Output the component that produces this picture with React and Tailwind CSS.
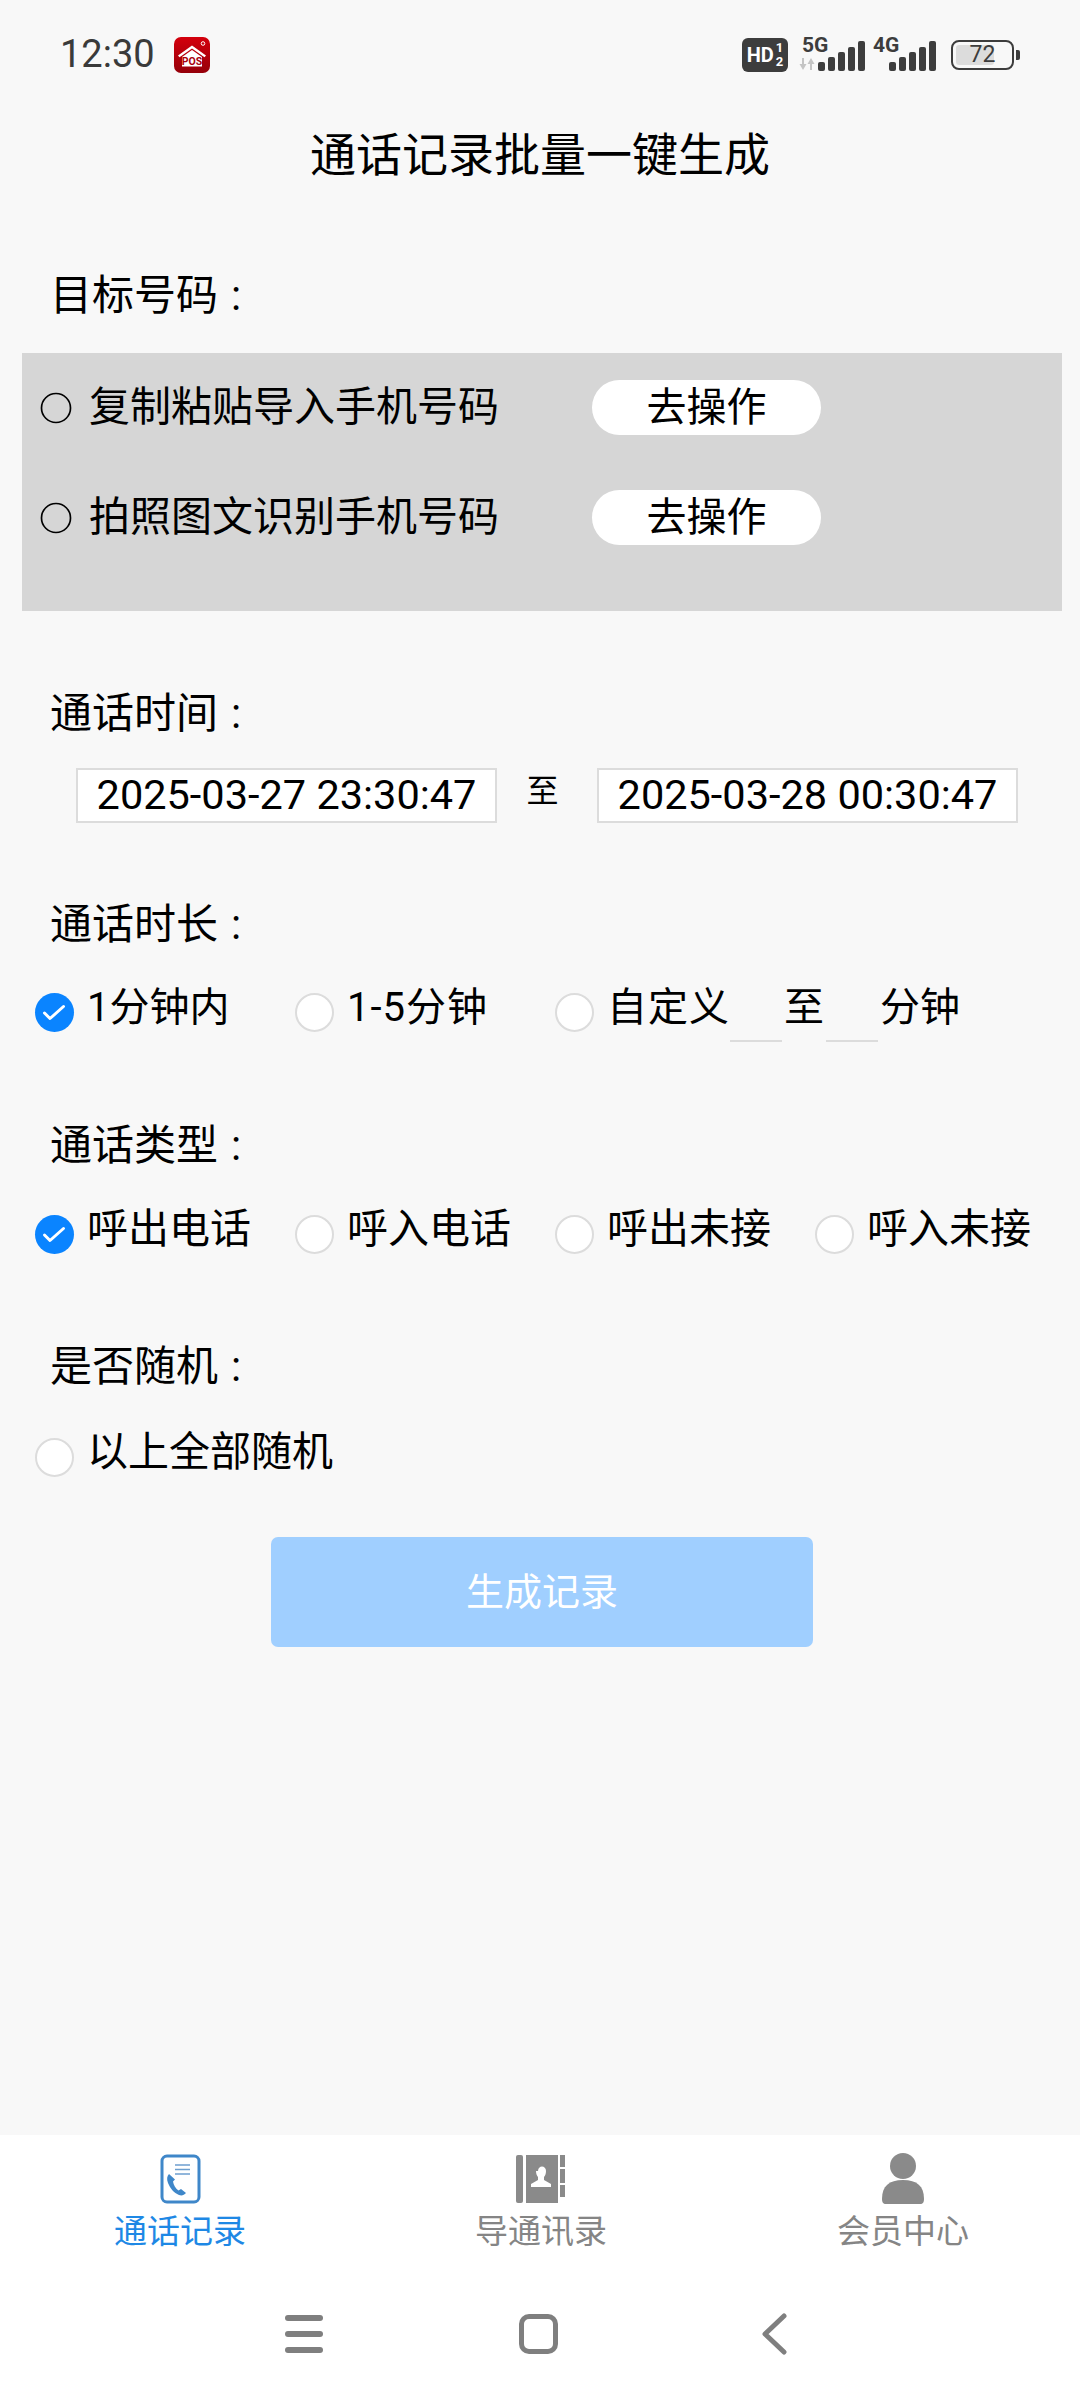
import * as React from 'react';

const cjk = { fontFamily: 'Roboto, "Noto Sans CJK SC", sans-serif' };

const Radio = ({ checked }) =>
  checked ? (
    <span className="h-[39px] w-[39px] shrink-0 rounded-full bg-[#0a84ff]">
      <svg width="39" height="39" viewBox="0 0 39 39" fill="none" stroke="#fff" strokeWidth="3" strokeLinecap="round" strokeLinejoin="round">
        <path d="M9.500 20l5.500 5.500L28.500 13.500" />
      </svg>
    </span>
  ) : (
    <span className="h-[39px] w-[39px] shrink-0 rounded-full border-2 border-[#dcdcdc] bg-white" />
  );

const SectionLabel = ({ children, className }) => (
  <div className={`flex text-[42px] leading-[56px] text-black ${className}`}>
    <span>{children}</span>
    <span className="ml-[13px]">:</span>
  </div>
);

const Option = ({ checked, label, textClass = 'top-[-5px] text-[41px]' }) => (
  <div className="flex w-[260px] items-center gap-[13px]">
    <Radio checked={checked} />
    <span className={`relative whitespace-nowrap leading-[50px] text-black ${textClass}`}>{label}</span>
  </div>
);

const ImportRow = ({ label }) => (
  <div className="flex h-[55px] items-center">
    <svg className="shrink-0" width="32" height="32" viewBox="0 0 32 32" fill="none" stroke="#000" strokeWidth="1.700">
      <circle cx="16" cy="16" r="14.500" />
    </svg>
    <span className="ml-[17px] w-[503px] whitespace-nowrap text-[41px] text-black">{label}</span>
    <button className="flex h-[55px] w-[229px] items-center justify-center rounded-full bg-white text-[40px] text-black">去操作</button>
  </div>
);

const DateBox = ({ value }) => (
  <div className="flex h-[55px] w-[421px] items-center justify-center border-2 border-[#dcdcdc] bg-white text-[41.500px] text-black">{value}</div>
);

const Bars = () => (
  <svg width="48" height="30" viewBox="0 0 48 30" fill="#3d3d3d">
    <rect x="0" y="21" width="7" height="9" rx="2" />
    <rect x="10" y="16" width="7" height="14" rx="2" />
    <rect x="20" y="11" width="7" height="19" rx="2" />
    <rect x="30" y="6" width="7" height="24" rx="2" />
    <rect x="40" y="0" width="7" height="30" rx="2" />
  </svg>
);

const StatusBar = () => (
  <div className="flex h-[108px] items-center pl-[60px] pr-[60px] pt-[1px]">
    <span className="text-[38px] text-[#3a3a3a]" style={{ fontFamily: 'Roboto, sans-serif' }}>12:30</span>
    <svg className="ml-[19px]" width="36" height="36" viewBox="0 0 36 36">
      <defs>
        <linearGradient id="pos" x1="0" y1="0" x2="0" y2="1">
          <stop offset="0" stopColor="#d4000c" />
          <stop offset="1" stopColor="#95000a" />
        </linearGradient>
      </defs>
      <rect width="36" height="36" rx="7" fill="url(#pos)" />
      <path d="M4 18.500L18 8.500l14 10-1.500 1.800L18 11.500 5.500 20.300z" fill="#fff" />
      <path d="M8 20l10-7 10 7v9.500H8z" fill="#fff" />
      <circle cx="29" cy="6.500" r="1.800" fill="none" stroke="#fff" strokeWidth="1" />
      <text x="18" y="28" textAnchor="middle" fontSize="10.500" fontWeight="700" fill="#a8000c" fontFamily="Roboto, sans-serif">POS</text>
    </svg>

    <div className="ml-auto flex items-center">
      <div className="flex h-[34px] w-[46px] items-center justify-center gap-[2px] rounded-[6px] bg-[#3d3d3d] text-white" style={{ fontFamily: 'Roboto, sans-serif' }}>
        <span className="text-[20px] font-bold leading-none">HD</span>
        <span className="flex flex-col text-[13px] font-bold leading-[14px]">
          <span>1</span>
          <span>2</span>
        </span>
      </div>
      <div className="relative ml-[11px] h-[32px] w-[67px]">
        <span className="absolute left-[3px] top-[-5px] text-[21px] font-bold leading-[22px] text-[#3d3d3d]" style={{ fontFamily: 'Roboto, sans-serif' }}>5G</span>
        <svg className="absolute bottom-[1px] left-0" width="16" height="12" viewBox="0 0 16 12" fill="#c4c4c4">
          <path d="M5 0v6h2.500L4 12 0.500 6H3V0zM11 12V6H8.500L12 0l3.500 6H13v6z" />
        </svg>
        <span className="absolute bottom-0 right-0"><Bars /></span>
      </div>
      <div className="relative ml-[7px] h-[32px] w-[64px]">
        <span className="absolute left-0 top-[-5px] text-[21px] font-bold leading-[22px] text-[#3d3d3d]" style={{ fontFamily: 'Roboto, sans-serif' }}>4G</span>
        <span className="absolute bottom-0 right-0"><Bars /></span>
      </div>
      <div className="ml-[14px] flex h-[30px] w-[63px] items-center rounded-[8px] border-2 border-[#3d3d3d] p-[3px]">
        <div className="relative flex h-full w-full items-center rounded-[3px]">
          <div className="absolute inset-y-0 left-0 w-[72%] rounded-[3px] bg-[#dcdcdc]" />
          <span className="relative w-full text-center text-[23px] leading-none text-[#3d3d3d]" style={{ fontFamily: 'Roboto, sans-serif' }}>72</span>
        </div>
      </div>
      <div className="ml-[2px] h-[10px] w-[4px] rounded-r-[2px] bg-[#3d3d3d]" />
    </div>
  </div>
);

const TabItem = ({ icon, label, active, className = '' }) => (
  <div className={`flex flex-col items-center ${className}`}>
    <div className="flex h-[52px] items-center justify-center">{icon}</div>
    <span className={`mt-[5px] text-[33px] leading-[44px] ${active ? 'text-[#1e88e5]' : 'text-[#858585]'}`}>{label}</span>
  </div>
);

const CallIcon = () => (
  <svg width="41" height="50" viewBox="0 0 41 50" fill="none">
    <rect x="2" y="2" width="37" height="46" rx="5" fill="#fff" stroke="#3f87c9" strokeWidth="3" />
    <path d="M15 11h15M15 15.500h15M15 20h15" stroke="#6d9fcf" strokeWidth="1.500" />
    <path d="M9 20c-2 2-2.500 5-1 9 2 5 6 10 11 12 3 1 5 0 7-2l-5-4-2.500 1.500c-3-2-5-5.500-5.500-9l2-2z" fill="#3f87c9" />
  </svg>
);

const BookIcon = () => (
  <svg width="50" height="50" viewBox="0 0 50 50" fill="#8a8a8a">
    <rect x="0" y="1" width="7" height="48" rx="2" />
    <rect x="10" y="1" width="32" height="48" />
    <rect x="44" y="1" width="5" height="12" />
    <rect x="44" y="15" width="5" height="14" />
    <rect x="44" y="31" width="5" height="12" />
    <path d="M22 17c0-3 2-4.500 4-4.500s4 1.500 4 4.500c0 3-1 5-2 6v3l7 4v3H15v-3l7-4v-3c-1-1-2-3-2-6z" fill="#fff" />
  </svg>
);

const PersonIcon = () => (
  <svg width="44" height="52" viewBox="0 0 44 52" fill="#8a8a8a">
    <ellipse cx="22" cy="13" rx="13" ry="13" />
    <path d="M1 46c0-13 7-19 21-19s21 6 21 19c0 3-1 5-4 5H5c-3 0-4-2-4-5z" />
  </svg>
);

const App = () => (
  <div className="flex h-[2400px] w-[1080px] flex-col bg-[#f8f8f8]" style={cjk}>
    <StatusBar />

    <main className="flex-1">
      <h1 className="mt-[1px] text-center text-[46px] font-normal leading-[92px] text-black">通话记录批量一键生成</h1>

      <SectionLabel className="ml-[50px] mt-[67px]">目标号码</SectionLabel>

      <section className="ml-[22px] mt-[29px] flex h-[258px] w-[1040px] flex-col gap-[55px] bg-[#d6d6d6] pl-[18px] pt-[27px]">
        <ImportRow label="复制粘贴导入手机号码" />
        <ImportRow label="拍照图文识别手机号码" />
      </section>

      <SectionLabel className="ml-[50px] mt-[75px]">通话时间</SectionLabel>

      <div className="ml-[76px] mt-[26px] flex items-start">
        <DateBox value="2025-03-27 23:30:47" />
        <span className="w-[100px] pr-[9px] pt-[3px] text-center text-[32px] leading-[40px] text-black">至</span>
        <DateBox value="2025-03-28 00:30:47" />
      </div>

      <SectionLabel className="ml-[50px] mt-[74px]">通话时长</SectionLabel>

      <div className="ml-[35px] mt-[34px] flex">
        <Option checked label="1分钟内" textClass="top-[-4px] text-[40px]" />
        <Option label="1-5分钟" textClass="top-[-4px] text-[40px] tracking-[1px]" />
        <div className="flex items-center gap-[13px]">
          <Radio />
          <div className="relative top-[-4px] flex items-center whitespace-nowrap text-[40px] leading-[50px] text-black">
            <span className="tracking-[1px]">自定义</span>
            <span className="relative top-[33px] h-[2px] w-[52px] bg-[#dcdcdc]" />
            <span className="mx-[2px]">至</span>
            <span className="relative top-[33px] h-[2px] w-[52px] bg-[#dcdcdc]" />
            <span className="ml-[2px]">分钟</span>
          </div>
        </div>
      </div>

      <SectionLabel className="ml-[50px] mt-[81px]">通话类型</SectionLabel>

      <div className="ml-[35px] mt-[35px] flex">
        <Option checked label="呼出电话" />
        <Option label="呼入电话" />
        <Option label="呼出未接" />
        <Option label="呼入未接" />
      </div>

      <SectionLabel className="ml-[50px] mt-[80px]">是否随机</SectionLabel>

      <div className="ml-[35px] mt-[37px] flex">
        <Option label="以上全部随机" />
      </div>

      <button className="ml-[271px] mt-[55px] flex h-[110px] w-[542px] items-center justify-center rounded-[7px] bg-[#a0cfff] text-[38px] text-white">生成记录</button>
    </main>

    <nav className="h-[265px] bg-white">
      <div className="grid grid-cols-3 pt-[18px]">
        <TabItem active label="通话记录" icon={<CallIcon />} />
        <TabItem label="导通讯录" icon={<BookIcon />} className="pl-[2px]" />
        <TabItem label="会员中心" icon={<PersonIcon />} className="pl-[6px]" />
      </div>
      <div className="ml-[285px] mt-[59px] flex items-center">
        <div className="flex h-[38px] w-[38px] flex-col justify-between">
          <span className="h-[6px] rounded-full bg-[#7f7f7f]" />
          <span className="h-[6px] rounded-full bg-[#7f7f7f]" />
          <span className="h-[6px] rounded-full bg-[#7f7f7f]" />
        </div>
        <span className="ml-[196px] h-[40px] w-[39px] rounded-[10px] border-[5px] border-[#7f7f7f]" />
        <svg className="ml-[203px]" width="26" height="42" viewBox="0 0 26 42" fill="none" stroke="#7f7f7f" strokeWidth="5" strokeLinecap="round" strokeLinejoin="round">
          <path d="M23 3L4 21l19 18" />
        </svg>
      </div>
    </nav>
  </div>
);

export default App;
